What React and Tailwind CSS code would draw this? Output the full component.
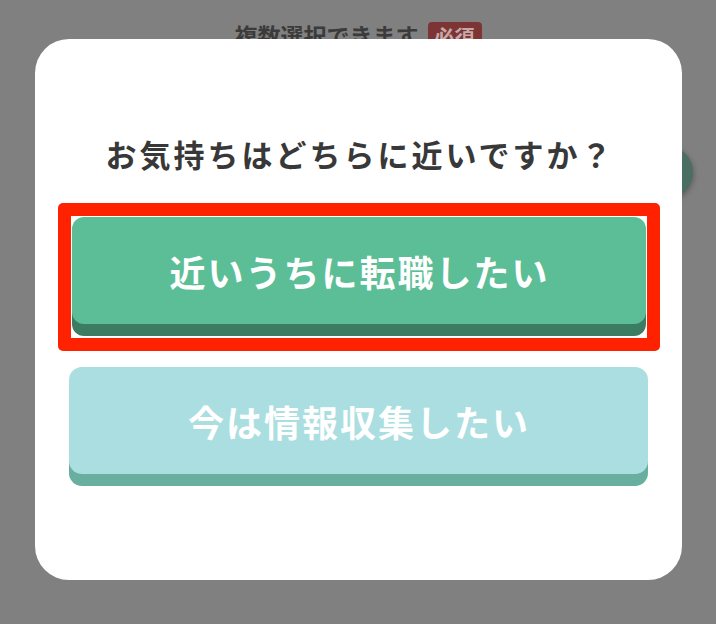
export default function App() {
  const jp = { fontFamily: '"Noto Sans CJK JP", "Noto Sans", sans-serif' };
  return (
    <div className="relative w-[716px] h-[624px] overflow-hidden bg-[#808080]" style={jp}>
      {/* page behind overlay */}
      <div className="flex justify-center pt-[19px]">
        <div className="flex items-start gap-[9px]">
          <span className="text-[23px] leading-[32px] font-bold text-[#3b3b3b]">複数選択できます</span>
          <span className="mt-[3px] px-[7px] rounded-[4px] bg-[#7d3434] text-[20px] leading-[30px] font-bold text-[#c7a7a7]">必須</span>
        </div>
      </div>
      <div className="absolute left-[641px] top-[146px] w-[52px] h-[52px] rounded-full bg-[#4b6e62] shadow-[0_2px_6px_rgba(0,0,0,0.35)]" />

      {/* modal */}
      <div className="absolute left-[35px] top-[39px] w-[647px] h-[541px] rounded-[34px] bg-white flex flex-col items-center">
        <h2 className="mt-[95px] text-[31px] leading-[40px] font-bold tracking-[3px] text-[#383838] pl-[3px]">
          お気持ちはどちらに近いですか？
        </h2>
        <div className="mt-[29px] w-[602px] rounded-[5px] bg-[#ff2200] p-[13px]">
          <div className="bg-white px-[1px] pt-[1px] pb-[2px]">
            <div className="mb-[12px] h-[107px] rounded-[12px] bg-[#5bbe96] shadow-[0_12px_0_#3c7c63] flex items-center justify-center">
              <span className="text-[36px] font-bold tracking-[2px] pl-[2px] text-white leading-none">近いうちに転職したい</span>
            </div>
          </div>
        </div>
        <div className="mt-[16px] w-[579px] ml-[-1px] mb-[12px] h-[107px] rounded-[13px] bg-[#aadee0] shadow-[0_12px_0_#68afa0] flex items-center justify-center">
          <span className="text-[36px] font-bold tracking-[2px] pl-[2px] text-white leading-none">今は情報収集したい</span>
        </div>
      </div>
    </div>
  );
}
